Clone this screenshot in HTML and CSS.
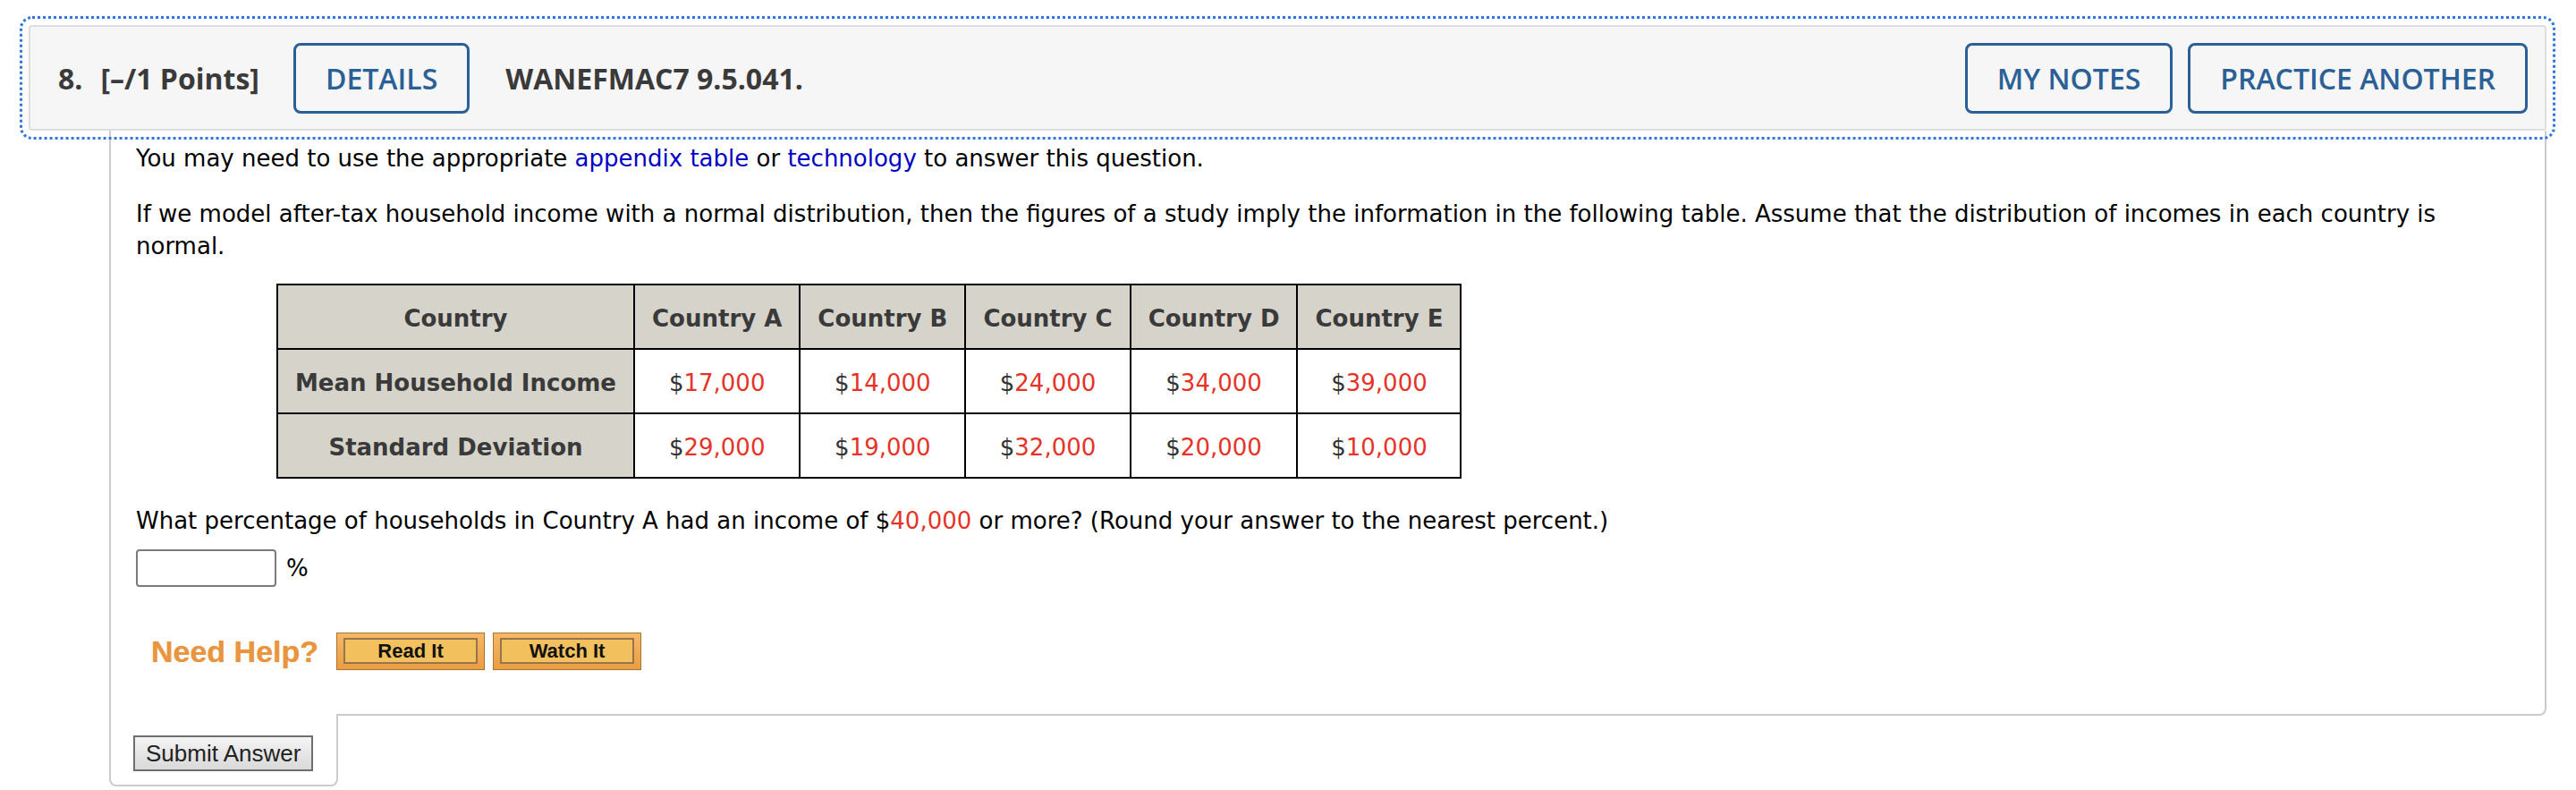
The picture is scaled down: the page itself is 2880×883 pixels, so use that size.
FILE: index.html
```html
<!DOCTYPE html>
<html lang="en">
<head>
<meta charset="utf-8">
<title>Question 8</title>
<link rel="stylesheet" href="styles.css">
</head>
<body>
<div class="page">
  <div class="qhead">
    <span class="qnum">8.</span>
    <span class="points">[–/1 Points]</span>
    <button class="hbtn-blue first">DETAILS</button>
    <span class="qcode">WANEFMAC7 9.5.041.</span>
    <span class="spacer"></span>
    <button class="hbtn-blue">MY NOTES</button>
    <button class="hbtn-blue next">PRACTICE ANOTHER</button>
  </div>
  <div class="qbody">
    <p class="para">You may need to use the appropriate <a class="lnk" href="#">appendix table</a> or <a class="lnk" href="#">technology</a> to answer this question.</p>
    <p class="para intro">If we model after-tax household income with a normal distribution, then the figures of a study imply the information in the following table. Assume that the distribution of incomes in each country is normal.</p>
    <table class="data">
      <tr>
        <th class="rowhead">Country</th>
        <th>Country A</th>
        <th>Country B</th>
        <th>Country C</th>
        <th>Country D</th>
        <th>Country E</th>
      </tr>
      <tr>
        <th class="rowhead">Mean Household Income</th>
        <td>$<span class="red">17,000</span></td>
        <td>$<span class="red">14,000</span></td>
        <td>$<span class="red">24,000</span></td>
        <td>$<span class="red">34,000</span></td>
        <td>$<span class="red">39,000</span></td>
      </tr>
      <tr>
        <th class="rowhead">Standard Deviation</th>
        <td>$<span class="red">29,000</span></td>
        <td>$<span class="red">19,000</span></td>
        <td>$<span class="red">32,000</span></td>
        <td>$<span class="red">20,000</span></td>
        <td>$<span class="red">10,000</span></td>
      </tr>
    </table>
    <p class="para question">What percentage of households in Country A had an income of $<span class="red">40,000</span> or more? (Round your answer to the nearest percent.)</p>
    <div class="answer">
      <input class="ans-input" type="text">
      <span class="unit">%</span>
    </div>
    <div class="help">
      <span class="help-label">Need Help?</span>
      <button class="hbtn"><span class="hbtn-in">Read It</span></button>
      <button class="hbtn second"><span class="hbtn-in">Watch It</span></button>
    </div>
  </div>
  <div class="tab">
    <button class="submit">Submit Answer</button>
  </div>
</div>
</body>
</html>
```
FILE: styles.css
```css
html, body {
  margin: 0;
  padding: 0;
  background: #ffffff;
}
body {
  font-family: "DejaVu Sans", Verdana, sans-serif;
  font-size: 26px;
  color: #000;
}
.page {
  padding: 28px 33px 0 32px;
}
.qhead {
  display: flex;
  align-items: center;
  box-sizing: border-box;
  height: 118px;
  padding: 0 19px 0 31px;
  background: #f6f6f6;
  border: 2px solid #dedede;
  border-radius: 4px;
  font-family: "Open Sans", sans-serif;
  font-size: 32px;
  color: #3a3a3a;
  outline: 3px dotted #2f77de;
  outline-offset: 7px;
}
.qnum {
  font-weight: 700;
  margin-right: 20px;
}
.points {
  font-weight: 700;
}
.qcode {
  font-weight: 700;
  margin-left: 40px;
}
.spacer {
  flex: 1;
}
.hbtn-blue {
  box-sizing: border-box;
  height: 79px;
  padding: 0 33px;
  border: 3px solid #2b6097;
  border-radius: 8px;
  background: transparent;
  font-family: "Open Sans", sans-serif;
  font-size: 32px;
  font-weight: 600;
  color: #2b6097;
  cursor: pointer;
}
.hbtn-blue.first {
  margin-left: 38px;
}
.hbtn-blue.next {
  margin-left: 17px;
}
.qbody {
  margin-left: 90px;
  border-left: 2px solid #cccccc;
  border-right: 2px solid #cccccc;
  border-bottom: 2px solid #cccccc;
  border-bottom-right-radius: 8px;
  padding: 13px 30px 49px 28px;
}
.para {
  margin: 0 0 26px 0;
  line-height: 36px;
}
.para.intro {
  margin-bottom: 24px;
}
.lnk {
  color: #0000c4;
  text-decoration: none;
}
.red {
  color: #e6332a;
}
.data {
  border-collapse: collapse;
  border: 2px solid #000;
  margin: 0 0 29px 157px;
  font-size: 26px;
  color: #333;
}
.data th, .data td {
  border: 2px solid #000;
  padding: 19px 19px 15px;
  line-height: 36px;
  text-align: center;
  font-weight: 400;
}
.data th {
  background: #d6d3ca;
  font-weight: 700;
  color: #3a3a3a;
}
.data td {
  background: #fff;
}
.question {
  margin-bottom: 14px;
}
.answer {
  display: flex;
  align-items: center;
}
.ans-input {
  box-sizing: border-box;
  width: 157px;
  height: 42px;
  margin: 0;
  border: 2px solid #7b7b7b;
  border-radius: 4px;
  background: #fff;
}
.unit {
  margin-left: 11px;
}
.help {
  display: flex;
  align-items: center;
  margin-top: 51px;
  padding-left: 17px;
}
.help-label {
  font-family: "Liberation Sans", Arial, sans-serif;
  font-weight: 700;
  font-size: 34px;
  color: #e9953f;
  text-shadow: 0 0 1px rgba(233, 149, 63, 0.7);
}
.hbtn {
  box-sizing: border-box;
  width: 166px;
  height: 42px;
  margin: 0 0 0 20px;
  padding: 5px 7px 6px 7px;
  border: 1px solid #a8742f;
  background: linear-gradient(#f6b768, #eb9d41);
  cursor: pointer;
}
.hbtn.second {
  margin-left: 9px;
}
.hbtn-in {
  display: flex;
  align-items: center;
  justify-content: center;
  box-sizing: border-box;
  height: 100%;
  border: 2px solid #94754c;
  background: #f2c15e;
  font-family: "Liberation Sans", Arial, sans-serif;
  font-weight: 700;
  font-size: 22px;
  color: #111;
}
.tab {
  box-sizing: border-box;
  width: 256px;
  margin: -2px 0 0 90px;
  padding: 24px 0 15px 25px;
  background: #fff;
  border: 2px solid #cccccc;
  border-top: 0;
  border-radius: 0 0 8px 8px;
}
.submit {
  box-sizing: border-box;
  height: 40px;
  margin: 0;
  padding: 0 12px;
  border: 2px solid #6e6e6e;
  background: linear-gradient(#f4f4f4, #d9d9d9);
  font-family: "Liberation Sans", Arial, sans-serif;
  font-size: 26px;
  color: #222;
  cursor: pointer;
}
```
